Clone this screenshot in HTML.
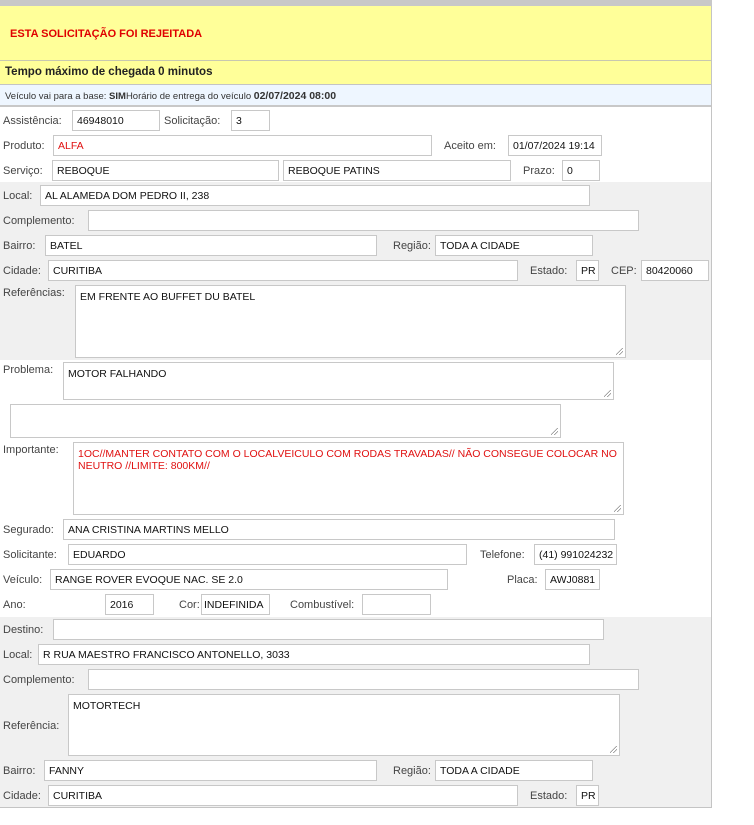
<!DOCTYPE html>
<html><head><meta charset="utf-8"><style>
*{box-sizing:border-box;margin:0;padding:0}
body{width:754px;height:825px;background:#fff;font-family:"Liberation Sans",Arial,sans-serif;font-size:11px;color:#333;position:relative;overflow:hidden}
.a{position:absolute}
.l{position:absolute;color:#444;font-size:11px;line-height:20px;white-space:nowrap}
.i{position:absolute;height:21px;background:#fff;border:1px solid #c8c8c8;padding:3px 4px 0;line-height:14px;color:#111;font-size:10.5px;white-space:nowrap;overflow:hidden}
.t{position:absolute;background:#fff;border:1px solid #c8c8c8;padding:5px 4px;line-height:12px;color:#111;font-size:10.5px}
.t:after{content:"";position:absolute;right:2px;bottom:2px;width:7px;height:7px;background:linear-gradient(135deg,transparent 45%,#888 46%,#888 52%,transparent 53%,transparent 70%,#888 71%,#888 77%,transparent 78%)}
</style></head><body>
<div class="a" style="left:0;top:0;width:712px;height:808px;border-right:1px solid #c4c4c4;border-bottom:1px solid #c4c4c4"></div>
<div class="a" style="left:0;top:0;width:712px;height:6px;background:#c8c8c8"></div>
<div class="a" style="left:0;top:6px;width:711px;height:55px;background:#ffff99;border-bottom:1px solid #c8c8b0"></div>
<div class="a" style="left:10px;top:28px;color:#e00000;font-weight:bold;font-size:11px">ESTA SOLICITAÇÃO FOI REJEITADA</div>
<div class="a" style="left:0;top:61px;width:711px;height:24px;background:#ffff99;border-bottom:1px solid #c4c4c4"></div>
<div class="a" style="left:5px;top:66px;color:#222;font-weight:bold;font-size:11.5px">Tempo máximo de chegada 0 minutos</div>
<div class="a" style="left:0;top:85px;width:711px;height:22px;background:#eef6ff;border-bottom:2px solid #c8c8c8"></div>
<div class="a" style="left:5px;top:90px;color:#333;font-size:9.5px">Veículo vai para a base: <b>SIM</b>Horário de entrega do veículo <b style="font-size:10.5px">02/07/2024 08:00</b></div>

<div class="l" style="left:3px;top:111px">Assistência:</div><div class="i" style="left:72px;top:110px;width:88px">46948010</div>
<div class="l" style="left:164px;top:111px">Solicitação:</div><div class="i" style="left:231px;top:110px;width:39px">3</div>
<div class="l" style="left:3px;top:136px">Produto:</div><div class="i" style="left:53px;top:135px;width:379px;color:#e01010">ALFA</div>
<div class="l" style="left:444px;top:136px">Aceito em:</div><div class="i" style="left:508px;top:135px;width:94px">01/07/2024 19:14</div>
<div class="l" style="left:3px;top:161px">Serviço:</div><div class="i" style="left:52px;top:160px;width:227px">REBOQUE</div>
<div class="i" style="left:283px;top:160px;width:228px">REBOQUE PATINS</div>
<div class="l" style="left:523px;top:161px">Prazo:</div><div class="i" style="left:562px;top:160px;width:38px">0</div>

<div class="a" style="left:0;top:182px;width:711px;height:178px;background:#f0f0f0"></div>
<div class="l" style="left:3px;top:186px">Local:</div><div class="i" style="left:40px;top:185px;width:550px">AL ALAMEDA DOM PEDRO II, 238</div>
<div class="l" style="left:3px;top:211px">Complemento:</div><div class="i" style="left:88px;top:210px;width:551px"></div>
<div class="l" style="left:3px;top:236px">Bairro:</div><div class="i" style="left:45px;top:235px;width:332px">BATEL</div>
<div class="l" style="left:393px;top:236px">Região:</div><div class="i" style="left:435px;top:235px;width:158px">TODA A CIDADE</div>
<div class="l" style="left:3px;top:261px">Cidade:</div><div class="i" style="left:48px;top:260px;width:470px">CURITIBA</div>
<div class="l" style="left:530px;top:261px">Estado:</div><div class="i" style="left:576px;top:260px;width:23px">PR</div>
<div class="l" style="left:611px;top:261px">CEP:</div><div class="i" style="left:641px;top:260px;width:68px">80420060</div>
<div class="l" style="left:3px;top:286px;line-height:14px">Referências:</div><div class="t" style="left:75px;top:285px;width:551px;height:73px">EM FRENTE AO BUFFET DU BATEL</div>

<div class="l" style="left:3px;top:363px;line-height:14px">Problema:</div><div class="t" style="left:63px;top:362px;width:551px;height:38px">MOTOR FALHANDO</div>
<div class="t" style="left:10px;top:404px;width:551px;height:34px"></div>
<div class="l" style="left:3px;top:443px;line-height:14px">Importante:</div><div class="t" style="left:73px;top:442px;width:551px;height:73px;color:#e01010">1OC//MANTER CONTATO COM O LOCALVEICULO COM RODAS TRAVADAS// NÃO CONSEGUE COLOCAR NO NEUTRO //LIMITE: 800KM//</div>
<div class="l" style="left:3px;top:520px">Segurado:</div><div class="i" style="left:63px;top:519px;width:552px">ANA CRISTINA MARTINS MELLO</div>
<div class="l" style="left:3px;top:545px">Solicitante:</div><div class="i" style="left:68px;top:544px;width:399px">EDUARDO</div>
<div class="l" style="left:480px;top:545px">Telefone:</div><div class="i" style="left:534px;top:544px;width:83px;padding-right:0">(41) 991024232</div>
<div class="l" style="left:3px;top:570px">Veículo:</div><div class="i" style="left:50px;top:569px;width:398px">RANGE ROVER EVOQUE NAC. SE 2.0</div>
<div class="l" style="left:507px;top:570px">Placa:</div><div class="i" style="left:545px;top:569px;width:55px">AWJ0881</div>
<div class="l" style="left:3px;top:595px">Ano:</div><div class="i" style="left:105px;top:594px;width:49px">2016</div>
<div class="l" style="left:179px;top:595px">Cor:</div><div class="i" style="left:201px;top:594px;width:69px;padding-left:2px;padding-right:2px">INDEFINIDA</div>
<div class="l" style="left:290px;top:595px">Combustível:</div><div class="i" style="left:362px;top:594px;width:69px"></div>

<div class="a" style="left:0;top:617px;width:711px;height:190px;background:#f0f0f0"></div>
<div class="l" style="left:3px;top:620px">Destino:</div><div class="i" style="left:53px;top:619px;width:551px"></div>
<div class="l" style="left:3px;top:645px">Local:</div><div class="i" style="left:38px;top:644px;width:552px">R RUA MAESTRO FRANCISCO ANTONELLO, 3033</div>
<div class="l" style="left:3px;top:670px">Complemento:</div><div class="i" style="left:88px;top:669px;width:551px"></div>
<div class="l" style="left:3px;top:716px">Referência:</div><div class="t" style="left:68px;top:694px;width:552px;height:62px">MOTORTECH</div>
<div class="l" style="left:3px;top:761px">Bairro:</div><div class="i" style="left:44px;top:760px;width:333px">FANNY</div>
<div class="l" style="left:393px;top:761px">Região:</div><div class="i" style="left:435px;top:760px;width:158px">TODA A CIDADE</div>
<div class="l" style="left:3px;top:786px">Cidade:</div><div class="i" style="left:48px;top:785px;width:470px">CURITIBA</div>
<div class="l" style="left:530px;top:786px">Estado:</div><div class="i" style="left:576px;top:785px;width:23px">PR</div>
</body></html>
